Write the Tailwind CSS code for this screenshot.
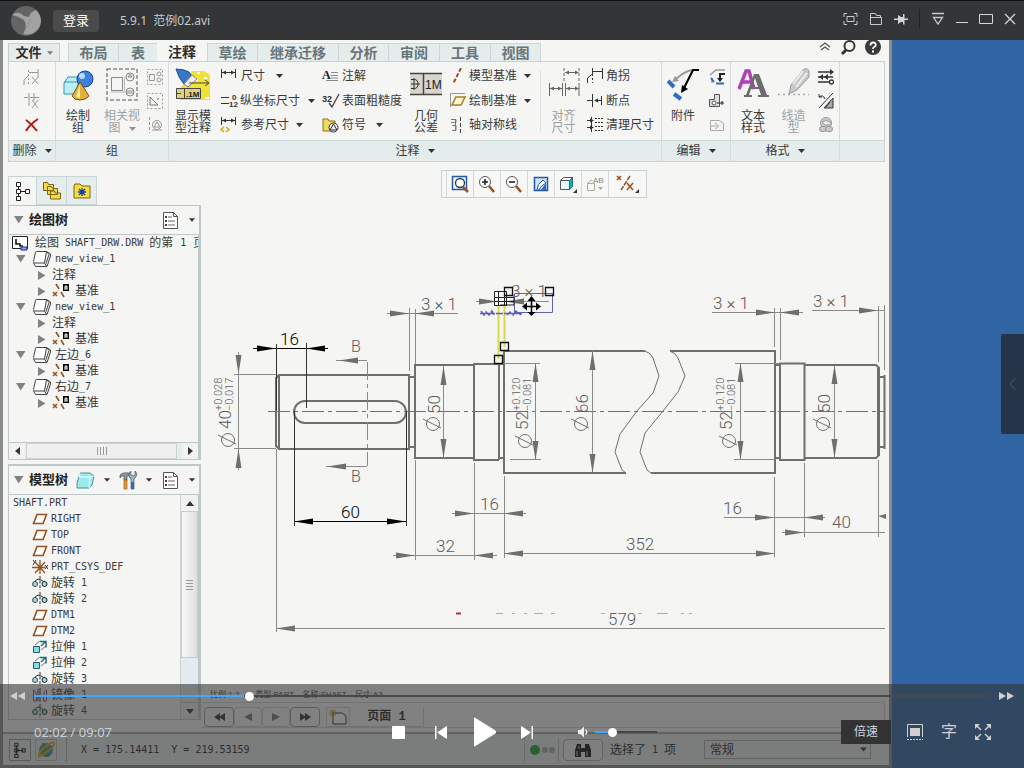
<!DOCTYPE html>
<html lang="zh-CN">
<head>
<meta charset="utf-8">
<meta name="viewport" content="width=device-width, initial-scale=1">
<title>5.9.1 范例02.avi</title>
<script src="https://cdn.jsdelivr.net/npm/@tailwindcss/browser@4"></script>
</head>
<body class="flex min-h-screen flex-col bg-[#333536] font-['Liberation_Sans','Noto_Sans_CJK_SC',sans-serif] text-xs text-[#3a3a3a]">

<svg class="hidden" aria-hidden="true">
  <symbol id="caret" viewBox="0 0 7 4"><path d="M0 0h7L3.500 4z" fill="#333"/></symbol>
  <symbol id="open" viewBox="0 0 10 8"><path d="M0 0h9.500L4.700 7.500z" fill="#828282"/></symbol>
  <symbol id="closed" viewBox="0 0 8 9"><path d="M0 0v9l7.500-4.500z" fill="#828282"/></symbol>
  <symbol id="view" viewBox="0 0 20 18"><g fill="#fff" stroke="#444"><path d="M1.500 11.500 3.500 2.500Q4 1.500 5 1.500h9.500L12.500 13H3Q1.500 13 1.500 11.500z"/><path d="M14.500 1.500 18.500 4v2L15 16.500H3.500L1.500 13M12.500 13l2 3M14.500 1.500l2.500 3-3 9" fill="none"/></g></symbol>
  <symbol id="datums" viewBox="0 0 18 16"><path d="m4 1 3 5M9 9l3 5" stroke="#96521c" stroke-width="1.600"/><path d="m1 9 4 4M5 9l-4 4" stroke="#96521c" stroke-width="1.500"/><path d="M11 1h6v7h-6z" fill="#000"/><path d="M13 7V3h2v4M13 5h2" stroke="#fff" fill="none"/></symbol>
  <symbol id="plane" viewBox="0 0 16 12"><path d="M5 1.500h9.500L11 10.500H1.500z" fill="#fff" stroke="#96521c" stroke-width="1.600"/></symbol>
  <symbol id="revolve" viewBox="0 0 16 14"><path d="M8 0v14" stroke="#333" stroke-dasharray="3 1.500"/><path d="M3 5q3-3.500 6-1t4 1" fill="none" stroke="#333"/><circle cx="3" cy="8" r="2.500" fill="#8fe3e3" stroke="#444"/><circle cx="12.500" cy="8" r="2.500" fill="#8fe3e3" stroke="#222"/></symbol>
  <symbol id="extrude" viewBox="0 0 16 14"><path d="M1.500 6.500h6v6h-6z" fill="#7fe0e6" stroke="#2a5c68"/><path d="m3 5 5-4M9 10l5-4" stroke="#777"/><path d="M8 1.500h6v6M9 6l4-4" fill="none" stroke="#1f6f7c" stroke-width="1.500"/></symbol>
  <symbol id="mirror" viewBox="0 0 16 14"><path d="M8 0v14M6 1v12" stroke="#333"/><path d="M1.500 13V2q3 1 3 6v5zM14.500 13V2q-3 1-3 6v5z" fill="none" stroke="#8a4aa0"/></symbol>
  <symbol id="list" viewBox="0 0 17 19"><path d="M1.500 1.500h10l4 4v12h-14z" fill="#fff" stroke="#555"/><path d="M11.500 1.500v4h4" fill="none" stroke="#555"/><path d="M3 5h2v2H3zM3 9h2v2H3zM3 13h2v2H3z" fill="#444"/><path d="M6 6h4M6 10h7M6 14h7" stroke="#666"/></symbol>
  <symbol id="dimh" viewBox="0 0 18 16"><path d="M1.500 1v9M15.500 1v9M2 4.500h13" stroke="#333"/><path d="m2 4.500 4-2v4zM15 4.500l-4-2v4z" fill="#333"/></symbol>
</svg>

<header class="flex h-10 shrink-0 items-center border-t border-[#111] bg-[#333536] pr-2 pl-[11px] text-[#c9c9c9]">
  <svg class="size-[30px]" viewBox="0 0 30 30" role="img" aria-label="用户头像"><circle cx="15" cy="15" r="15" fill="#646464"/><path d="M1 9q6-5 12 1l5 1q1-5 7-7 5 5 5 11-1 10-10 13-6 1-8 0 5-7 1-14Q7 10 1 9z" fill="#a2a2a2"/><path d="M20 12q-2 7-7 14" stroke="#919191" fill="none"/></svg>
  <button class="ml-3 h-[22px] w-[46px] rounded-sm bg-[#4b4b4b] text-[13px] leading-5 text-white">登录</button>
  <h1 class="ml-[21px] font-['Noto_Sans','Noto_Sans_CJK_SC',sans-serif] text-xs whitespace-pre text-[#c4cbd2]">5.9.1  范例02.avi</h1>
  <nav class="mb-1 ml-auto flex items-center gap-[11px]" aria-label="窗口">
    <button aria-label="适应窗口" class="h-4 w-[15px]"><svg viewBox="0 0 15 14" class="h-[14px] w-[15px]" fill="none" stroke="#c9c9c9"><path d="M1 5V1.500h3M11 1.500h3V5M14 9v3.500h-3M4 12.500H1V9M4 4.500h7v5H4z"/></svg></button>
    <button aria-label="打开文件" class="h-4 w-[14px]"><svg viewBox="0 0 14 14" class="size-[14px]" fill="none" stroke="#c9c9c9"><path d="M1.500 12.500v-11h5l1 2h4v2M1.500 5.500h11v7h-11z"/></svg></button>
    <button aria-label="置顶" class="h-4 w-[14px]"><svg viewBox="0 0 14 14" class="size-[14px]" fill="#d5d5d5"><path d="M0 6.500h4V3l3 2h2V2h1.500v4.500H14V8h-3.500v4.500H9V10H7l-3 2V8H0z"/></svg></button>
    <span class="h-5 w-px bg-[#222]"></span>
    <button aria-label="菜单" class="h-4 w-[14px]"><svg viewBox="0 0 14 14" class="size-[14px]" fill="none" stroke="#c9c9c9"><path d="M1 1.500h12M2.500 5.500h9L7 12z" stroke-width="1.300"/></svg></button>
    <button aria-label="最小化" class="h-4 w-3"><svg viewBox="0 0 12 14" class="h-[14px] w-3" stroke="#d5d5d5"><path d="M0 10.500h12"/></svg></button>
    <button aria-label="最大化" class="h-4 w-[14px]"><svg viewBox="0 0 14 14" class="size-[14px]" fill="none" stroke="#d5d5d5"><path d="M.5 2.500h13v9H.5z"/></svg></button>
    <button aria-label="关闭" class="h-4 w-[12px]"><svg viewBox="0 0 12 14" class="h-[14px] w-3" stroke="#d5d5d5" stroke-width="1.300"><path d="m1 2 10 10M11 2 1 12"/></svg></button>
  </nav>
</header>

<main class="relative grid flex-1 grid-cols-[892fr_132fr] bg-[#3164a2]">
  <section class="flex min-w-0 flex-col border-r-3 border-b-3 border-l-3 border-[#8b8b8b] bg-[#f5f5f4] pt-[3px]" aria-label="工程图">

    <!-- Ribbon tabs -->
    <div class="ml-[5px] mr-1 flex h-[18px] items-stretch text-sm leading-[16px] font-bold text-[#68757a]">
      <button class="flex w-[52px] items-center justify-center gap-[5px] border border-b-0 border-[#c6cfd0] bg-[#e6ebeb] text-[13px] text-[#2c2c2c]">文件<svg class="h-1 w-[6px] shrink-0 opacity-60"><use href="#caret"/></svg></button>
      <div class="ml-2 flex" role="tablist">
        <button role="tab" class="w-[51px] border border-b-0 border-[#cdd6d7] bg-[#e4ecec]">布局</button>
        <button role="tab" class="w-[38px] border-t border-[#cdd6d7] bg-[#e4ecec]">表</button>
        <button role="tab" aria-selected="true" class="w-[50px] text-[#2c2c2c]">注释</button>
        <button role="tab" class="w-[51px] border border-b-0 border-[#cdd6d7] bg-[#e4ecec]">草绘</button>
        <button role="tab" class="w-[81px] border-t border-r border-[#cdd6d7] bg-[#e4ecec]">继承迁移</button>
        <button role="tab" class="w-[50px] border-t border-r border-[#cdd6d7] bg-[#e4ecec]">分析</button>
        <button role="tab" class="w-[51px] border-t border-r border-[#cdd6d7] bg-[#e4ecec]">审阅</button>
        <button role="tab" class="w-[51px] border-t border-r border-[#cdd6d7] bg-[#e4ecec]">工具</button>
        <button role="tab" class="w-[50px] border-t border-r border-[#cdd6d7] bg-[#e4ecec]">视图</button>
      </div>
      <div class="mr-1 mb-[10px] ml-auto flex items-center gap-2">
        <button aria-label="折叠功能区"><svg class="h-[10px] w-3" viewBox="0 0 12 10" fill="none" stroke="#555" stroke-width="1.300"><path d="m1 5 5-4 5 4M2 8l4-3 4 3"/></svg></button>
        <button aria-label="搜索"><svg class="size-[18px]" viewBox="0 0 18 18" fill="none" stroke="#333"><circle cx="10.500" cy="8" r="5" stroke-width="2"/><path d="m7 12-4 4" stroke-width="3"/></svg></button>
        <button aria-label="帮助"><svg class="size-4" viewBox="0 0 16 16"><circle cx="8" cy="8" r="8" fill="#3a3a3a"/><path d="M5.500 6.500q0-3 2.700-3t2.500 2.500q0 1.500-1.500 2T8 10" fill="none" stroke="#fff" stroke-width="1.800"/><path d="M7 11.500h2v2H7z" fill="#fff"/></svg></button>
      </div>
    </div>

    <!-- Ribbon groups -->
    <div class="mr-1 ml-[5px] flex h-[101px] border border-[#c9d3d3] leading-3">
      <div class="flex w-[47px] flex-col border-r border-[#d5dcdc]">
        <div class="flex h-[78px] flex-col items-center pt-[3px]">
          <button aria-label="删除拐角" class="h-6"><svg class="size-[18px]" viewBox="0 0 18 18" fill="none" stroke="#999"><path d="M1 17v-5l4-4M15 1v9M6 4.500h9M9 9l6 7M15 9l-6 7"/><path d="M5.500 2v14" stroke-dasharray="2 2"/></svg></button>
          <button aria-label="删除断点" class="h-6"><svg class="size-[18px]" viewBox="0 0 18 18" fill="none" stroke="#999"><path d="M1 5.500h4M6 1v13M11 1v8M7 5.500h9M9 8l6 8M15 8l-6 8"/></svg></button>
          <button aria-label="删除" class="h-6"><svg class="h-4 w-[14px]" viewBox="0 0 14 16" fill="none" stroke="#b21a12" stroke-width="2"><path d="M1 3q6 4 11 11M13 2Q5 7 1 14"/></svg></button>
        </div>
        <button class="flex flex-1 items-center justify-center gap-2 border-t border-[#d0d9d9] bg-[#e4ecec]">删除<svg class="h-1 w-[7px]"><use href="#caret"/></svg></button>
      </div>
      <div class="flex w-[113px] flex-col border-r border-[#d5dcdc]">
        <div class="flex h-[78px] pt-[6px] pl-[6px]">
          <button class="flex w-8 flex-col items-center gap-2"><svg class="h-[34px] w-8 shrink-0" viewBox="0 0 32 34"><path d="M2 15 6 9h14v14l-3 3H2z" fill="#bdeff4" stroke="#3795ac"/><path d="M2 14h14v12M16 14l4-5" fill="none" stroke="#3795ac"/><circle cx="23" cy="11" r="8" fill="#3b82dd" stroke="#1c4590"/><circle cx="20" cy="8" r="3" fill="#b5dcff"/><path d="m18 14 9 14q-3 4-9 4-6 0-8-4z" fill="#e0b23c" stroke="#76520f"/><path d="m18 16-4 13 4 1z" fill="#fbe9a0"/></svg><span>绘制<br>组</span></button>
          <button class="ml-2 flex w-10 flex-col items-center gap-2 text-[#a0a0a0]"><svg class="h-[34px] w-8 shrink-0" viewBox="0 0 32 34" fill="none" stroke="#888"><path d="M1 1h30v31H1z" stroke-width="1.500" stroke-dasharray="4 2"/><path d="M5.500 9.500h11v13h-11z"/><path d="M18.500 9v15H5" stroke="#bbb"/><circle cx="24" cy="9" r="4"/><circle cx="24" cy="24" r="4"/><path d="m22 9 2-3 2 3zM20 23h8M20 25h8"/></svg><span>相关视<br>图<svg class="ml-2 inline h-1 w-[7px] opacity-50"><use href="#caret"/></svg></span></button>
          <div class="ml-[5px] flex flex-col gap-2 pt-px">
            <button aria-label="绘制组图元" class="h-4"><svg class="size-4" viewBox="0 0 16 16" fill="none" stroke="#999"><path d="M.5.500h15v15H.500z" stroke-dasharray="2 2"/><path d="M2.500 5.500h5v6h-5z"/><circle cx="12" cy="5" r="2"/><circle cx="12" cy="11" r="2"/></svg></button>
            <button aria-label="关联" class="h-4"><svg class="size-4" viewBox="0 0 16 16" fill="none" stroke="#999"><path d="M.5.500h15v15H.500z" stroke-dasharray="2 2"/><path d="m3 4 8 8H3zM11 5v2" stroke="#777"/></svg></button>
            <button aria-label="取消关联" class="h-4"><svg class="size-4" viewBox="0 0 16 16" fill="none" stroke="#999"><path d="M2.500 0v16" stroke-dasharray="3 2"/><circle cx="10" cy="8" r="4.500"/><path d="m7 10 3-5 3 5zM5 13h10"/></svg></button>
          </div>
        </div>
        <div class="flex flex-1 items-center justify-center border-t border-[#d0d9d9] bg-[#e4ecec]">组</div>
      </div>
      <div class="flex w-[493px] flex-col border-r border-[#d5dcdc]">
        <div class="flex h-[78px]">
          <button class="ml-1 flex w-10 flex-col items-center gap-2 pt-[6px]"><svg class="h-[34px] w-9 shrink-0" viewBox="0 0 36 34"><path d="M17 3h12l6 4v25H5V21z" fill="#efe139"/><path d="M22 5h3M29 10h3M20 12h3M30 30h4" stroke="#fff" stroke-width="2"/><path d="M1 1q8 0 13 3l3 4-8 8Q4 11 1 1z" fill="#3877c8" stroke="#21518c"/><path d="M17 7 9 16l4 3 9-8z" fill="#eee" stroke="#888"/><path d="M14 15h20m-4-3 4 3-4 3" fill="none" stroke="#444"/><path d="M1.500 20.500h24v10h-24z" fill="#ddd27a" stroke="#444"/><path d="M9.500 20v11M1 25.500h5" stroke="#444"/><text x="11" y="29" font-size="8" font-weight="700" fill="#222">.1M</text></svg><span class="w-10">显示模<br>型注释</span></button>
          <div class="ml-[7px] flex w-[102px] flex-col pt-[2px]">
            <button class="flex h-6 items-center gap-[3px]"><svg class="h-4 w-[18px]"><use href="#dimh"/></svg><span>尺寸</span><svg class="ml-2 h-1 w-[7px]"><use href="#caret"/></svg></button>
            <button class="flex h-[25px] items-center gap-[2px] whitespace-nowrap"><svg class="h-4 w-[18px] shrink-0 overflow-visible" viewBox="0 0 18 16"><path d="M1 4.500h8M1 10.500h8" stroke="#333"/><text x="12" y="7" font-size="8" font-weight="700" fill="#333">0</text><text x="9" y="14" font-size="8" font-weight="700" fill="#333">12</text></svg><span>纵坐标尺寸</span><svg class="ml-[6px] h-1 w-[7px] shrink-0"><use href="#caret"/></svg></button>
            <button class="flex h-6 items-center gap-[3px]"><svg class="h-4 w-[18px]" viewBox="0 0 18 16"><path d="M1.500 0v8M15.500 0v8M2 3.500h13" stroke="#333"/><path d="m2 3.500 4-2v4zM15 3.500l-4-2v4z" fill="#333"/><path d="m4 10-3 2.500L4 15M6 10l3 2.500L6 15" fill="none" stroke="#c9ae10" stroke-width="1.500"/></svg><span>参考尺寸</span><svg class="ml-1 h-1 w-[7px]"><use href="#caret"/></svg></button>
          </div>
          <div class="flex w-[86px] flex-col pt-[2px]">
            <button class="flex h-6 items-center gap-[2px]"><svg class="h-4 w-[18px] overflow-visible" viewBox="0 0 18 16"><text x="0" y="11" font-size="12" font-weight="700" font-family="Liberation Serif" fill="#222">A</text><path d="M9 4.500h7M9 7.500h7M4 12.500h12M9 10h7" stroke="#888"/></svg><span>注解</span></button>
            <button class="flex h-[25px] items-center gap-[2px] whitespace-nowrap"><svg class="h-4 w-[18px] shrink-0 overflow-visible" viewBox="0 0 18 16"><text x="0" y="9" font-size="9" font-weight="700" fill="#333">32</text><path d="m7 10 3 4 7-13" fill="none" stroke="#444" stroke-width="1.300"/></svg><span>表面粗糙度</span></button>
            <button class="flex h-6 items-center gap-[2px]"><svg class="h-4 w-[18px]" viewBox="0 0 18 16"><path d="M1 3V2h5l1 2h6v10H1z" fill="#f1dc5e" stroke="#8b7514"/><circle cx="11.500" cy="10.500" r="4.500" fill="#eee" stroke="#333"/><path d="m8 13 3.500-6 3.500 6z" fill="none" stroke="#333"/></svg><span>符号</span><svg class="ml-2 h-1 w-[7px]"><use href="#caret"/></svg></button>
          </div>
          <button class="flex w-9 flex-col items-center gap-2 pt-[6px]"><svg class="h-[34px] w-8 shrink-0" viewBox="0 0 32 34"><path d="M0 6h32v20H0z" fill="#d8d6cc"/><path d="M0 5.500h32M0 26.500h32M13.500 6v21" stroke="#444" stroke-width="1.500"/><path d="M1 11.500h3q4 0 4 4.500t-4 4.500H1M4 10v12M1 16h9" fill="none" stroke="#333"/><text x="15" y="21" font-size="12" fill="#222">1M</text></svg><span>几何<br>公差</span></button>
          <div class="ml-[6px] flex w-[90px] flex-col pt-[2px]">
            <button class="flex h-6 items-center gap-[3px] whitespace-nowrap"><svg class="size-4 shrink-0" viewBox="0 0 16 16"><path d="M11 0 3 16" stroke="#96521c" stroke-width="2" stroke-dasharray="4 2"/></svg><span>模型基准</span><svg class="ml-1 h-1 w-[7px] shrink-0"><use href="#caret"/></svg></button>
            <button class="flex h-[25px] items-center gap-[3px] whitespace-nowrap"><svg class="size-4 shrink-0" viewBox="0 0 16 16"><path d="M.5.500V14M.500.500H15" stroke="#999"/><path d="M6 4h9l-4 8H2z" fill="#fff8e0" stroke="#b57a1c" stroke-width="1.600"/></svg><span>绘制基准</span><svg class="ml-1 h-1 w-[7px] shrink-0"><use href="#caret"/></svg></button>
            <button class="flex h-6 items-center gap-[3px] whitespace-nowrap"><svg class="size-4 shrink-0" viewBox="0 0 16 16" fill="none"><path d="M1 2.500h5v3H1M2 8.500h4v5H2M5.500 2v12" stroke="#777"/><path d="M10.500 0v16" stroke="#444" stroke-dasharray="4 2"/></svg><span>轴对称线</span></button>
          </div>
          <button class="my-2 flex w-[46px] flex-col items-center gap-[9px] border-l border-[#dde2e2] text-[#a0a0a0]"><svg class="-mt-[2px] h-[33px] w-8 shrink-0" viewBox="0 0 32 33" fill="none" stroke="#666"><path d="M16 0v13M31 0v13" stroke-dasharray="3 2"/><path d="M1.500 15v13M14.500 15v13M17.500 15v13M31 15v13M17 4.500h13M2 20.500h12M18 20.500h13"/><path d="m17 4.500 4-2v4zM31 4.500l-4-2v4zM2 20.500l4-2v4zM14 20.500l-4-2v4zM18 20.500l4-2v4zM31 20.500l-4-2v4z" fill="#666" stroke="none"/></svg><span>对齐<br>尺寸</span></button>
          <div class="flex flex-1 flex-col pt-[2px] pl-px">
            <button class="flex h-6 items-center gap-[3px]"><svg class="size-4" viewBox="0 0 16 16" fill="none" stroke="#333"><path d="M.5 15v-5l5-4V0M15.500 0v11M6 3.500h9"/><path d="M5.500 6v9" stroke-dasharray="2 2"/></svg><span>角拐</span></button>
            <button class="flex h-[25px] items-center gap-[3px]"><svg class="size-4" viewBox="0 0 16 16" fill="none" stroke="#333"><path d="M0 7.500h5M5.500 1v13M8 7.500h7M14.500 3v9"/><path d="m7 7.500 4-2v4z" fill="#333" stroke="none"/></svg><span>断点</span></button>
            <button class="flex h-6 items-center gap-[3px] whitespace-nowrap"><svg class="size-4 shrink-0" viewBox="0 0 16 16" fill="none" stroke="#333"><path d="M0 3.500h6M0 10.500h6M4.500 0v15"/><path d="m7 3.500-4-2v4zM7 10.500l-4-2v4z" fill="#333" stroke="none"/><path d="M8 1.500h8M8 5.500h8M8 9.500h8M8 13.500h8" stroke-dasharray="2 1"/></svg><span>清理尺寸</span></button>
          </div>
        </div>
        <button class="flex flex-1 items-center justify-center gap-2 border-t border-[#d0d9d9] bg-[#e4ecec]">注释<svg class="h-1 w-[7px]"><use href="#caret"/></svg></button>
      </div>
      <div class="flex w-[69px] flex-col border-r border-[#d5dcdc]">
        <div class="flex h-[78px] justify-between px-[5px] pt-[6px]">
          <button class="flex w-8 flex-col items-center gap-2"><svg class="h-[34px] w-8 shrink-0" viewBox="0 0 32 34" fill="none"><path d="M27 2q-8 0-18 9" stroke="#999" stroke-width="2"/><path d="m5 14 3-6 4 5z" fill="#999"/><path d="M32 2h-6L16 22" stroke="#000" stroke-width="2"/><path d="m14 25 1-8 6 4z" fill="#000"/><path d="m1 13 6 6M7 26l7 5" stroke="#2b6cc4" stroke-width="4"/></svg><span>附件</span></button>
          <div class="flex flex-col gap-2 pt-px">
            <button aria-label="移动附件" class="h-4"><svg class="size-4" viewBox="0 0 16 16" fill="none"><path d="M16 1H7L1 6M3 9v5" stroke="#999" stroke-width="1.500"/><path d="M16 5h-5v7" stroke="#222" stroke-width="2"/><path d="M8 9h6l-3 4z" fill="#222"/><path d="M7 14.500h8M2 9l3 4" stroke="#2b6cc4" stroke-width="2"/></svg></button>
            <button aria-label="对齐" class="h-4"><svg class="size-4" viewBox="0 0 16 16" fill="none" stroke="#555"><path d="M.5 6.500h5v-5h5v12H.500z" fill="#ddd"/><circle cx="5" cy="10" r="2" fill="#fff"/><path d="M8 10h7m-2-2v4" stroke="#222"/></svg></button>
            <button aria-label="移动到页面" class="h-4"><svg class="size-4" viewBox="0 0 16 16" fill="none" stroke="#aaa"><path d="M1.500 3.500h9l4 3v7h-13z"/><path d="M1 9h7m-2-3 4 3-4 3"/></svg></button>
          </div>
        </div>
        <button class="flex flex-1 items-center justify-center gap-2 border-t border-[#d0d9d9] bg-[#e4ecec]">编辑<svg class="h-1 w-[7px]"><use href="#caret"/></svg></button>
      </div>
      <div class="flex w-[109px] flex-col border-r border-[#d5dcdc]">
        <div class="flex h-[78px] justify-between pt-[6px] pr-[5px] pl-[6px]">
          <button class="flex w-8 flex-col items-center gap-2"><svg class="h-[34px] w-8 shrink-0" viewBox="0 0 32 34" fill="none"><path d="m2 21 7-18h3l5 18M5 14h9" stroke="#b040b8" stroke-width="3.500"/><path d="M17 6h5l8 21h2v2H21v-2h3l-2-6h-8l-2 6h3v2H7v-2h2zM18 10l-3 9h6z" fill="#6c6c6c" fill-rule="evenodd"/></svg><span>文本<br>样式</span></button>
          <button class="flex w-8 flex-col items-center gap-2 text-[#a0a0a0]"><svg class="h-[34px] w-8 shrink-0" viewBox="0 0 32 34"><path d="M25 2q4-3 6 1v6L19 22l-8 4 2-9z" fill="#c9c9c9" stroke="#999"/><path d="m25 3-10 13M29 5 18 19" stroke="#eee" stroke-width="2"/><path d="M0 26.500h31" stroke="#aaa" stroke-width="1.500" stroke-dasharray="2 3"/></svg><span>线造<br>型</span></button>
          <div class="flex flex-col gap-2 pt-px">
            <button aria-label="箭头样式" class="h-4"><svg class="size-4" viewBox="0 0 16 16" fill="none" stroke="#333" stroke-width="1.300"><path d="M0 3h15M0 8h15M0 13h11"/><path d="m12 0 4 3-4 3zM1 8l4-3v6zM6 8l4-3v6z" fill="#333" stroke="none"/><circle cx="13.500" cy="13" r="2" fill="#fff"/></svg></button>
            <button aria-label="重复上一格式" class="h-4"><svg class="size-4" viewBox="0 0 16 16" fill="none" stroke="#333"><path d="M15 0 1 15M1 4q4-3 6 2M1 1v3h3"/><path d="M15 5v10H6z" fill="#aaa"/><path d="m12 9-4 5"/></svg></button>
            <button aria-label="超链接" class="h-4"><svg class="size-4" viewBox="0 0 16 16" fill="#c9c9c9" stroke="#999"><circle cx="8" cy="6" r="5.500"/><path d="M4 5q4-3 8 0t-5 3z" fill="#eee"/><rect x="1.500" y="9.500" width="7" height="5" rx="2.500"/><rect x="7.500" y="9.500" width="7" height="5" rx="2.500"/></svg></button>
          </div>
        </div>
        <button class="flex flex-1 items-center justify-center gap-2 border-t border-[#d0d9d9] bg-[#e4ecec]">格式<svg class="h-1 w-[7px]"><use href="#caret"/></svg></button>
      </div>
      <div class="flex flex-1 flex-col"><div class="h-[78px]"></div><div class="flex-1 border-t border-[#d0d9d9] bg-[#e4ecec]"></div></div>
    </div>

    <div class="flex flex-1 pl-[5px]">
      <!-- Side trees -->
      <aside class="flex w-[193px] shrink-0 flex-col pt-[14px]">
        <div class="flex h-[29px]">
          <button aria-label="模型树" class="flex w-7 items-center justify-center border-t border-l border-[#c9d3d3]"><svg class="size-5" viewBox="0 0 20 20" fill="none" stroke="#222"><path d="M5.500 4v12M6 10.500h8"/><path d="M3.500 1.500h4v4h-4zM3.500 8.500h4v4h-4zM3.500 15.500h4v4h-4zM12.500 8.500h4v4h-4z" fill="#fff"/></svg></button>
          <button aria-label="文件夹浏览器" class="flex w-[31px] items-center justify-center border border-[#c9d3d3] bg-[#e4ecec]"><svg class="size-5" viewBox="0 0 20 20" fill="#f3d94e" stroke="#7c6410"><path d="M1.500 9V1.500h4l1 2h5v6H1.500zM5.500 13V5.500h4l1 2h5v6h-10zM8.500 18v-8h4l1 2h5v6h-10z"/></svg></button>
          <button aria-label="收藏夹" class="flex w-[30px] items-center justify-center border border-l-0 border-[#c9d3d3] bg-[#e4ecec]"><svg class="h-4 w-[18px]" viewBox="0 0 18 16"><path d="M1 15V3l1-2h5l2 2h8v12z" fill="#f4dc42" stroke="#7c6410"/><path d="M9 5v8M5 9h8M6 6l6 6M12 6l-6 6" stroke="#1840a0" stroke-width="1.300"/></svg></button>
        </div>
        <div class="flex h-[29px] items-center border-t border-r-2 border-l border-[#bfc8c9] pr-1 pl-[5px]">
          <svg class="h-2 w-[10px]"><use href="#open"/></svg>
          <h2 class="ml-[5px] text-[13px] leading-4 font-bold text-[#222]">绘图树</h2>
          <button aria-label="设置" class="ml-auto flex items-center gap-[10px]"><svg class="h-[19px] w-[17px]"><use href="#list"/></svg><svg class="h-1 w-[6px]"><use href="#caret"/></svg></button>
        </div>
        <ul class="h-[208px] overflow-hidden border-t border-r-3 border-l border-[#bfc8c9] font-['DejaVu_Sans_Mono','Noto_Sans_CJK_SC',monospace] leading-4 whitespace-nowrap [&>li]:flex [&>li]:h-4 [&>li]:items-center">
          <li class="pl-[3px]"><svg class="mr-[7px] size-4 shrink-0" viewBox="0 0 16 16" fill="none"><path d="M.5 1.500h15v12H.500z" fill="#fff" stroke="#222"/><path d="M4 4v5h4v2h3" stroke="#111" stroke-width="1.600"/><path d="M9 12h6v3H9z" fill="#9aa0e8" stroke="#22a"/></svg><span>绘图</span><span class="ml-[6px] text-[10px]">SHAFT_DRW.DRW</span><span class="ml-[6px]">的第</span><span class="mx-[7px] text-[10px]">1</span><span>页</span></li>
          <li class="pl-[7px]"><svg class="mr-[6px] h-2 w-[10px]"><use href="#open"/></svg><svg class="mr-[3px] h-[18px] w-5"><use href="#view"/></svg><span class="text-[10px]">new_view_1</span></li>
          <li class="pl-[29px]"><svg class="mr-[6px] h-[9px] w-2"><use href="#closed"/></svg><span>注释</span></li>
          <li class="pl-[29px]"><svg class="mr-[6px] h-[9px] w-2"><use href="#closed"/></svg><svg class="mr-[5px] h-4 w-[18px]"><use href="#datums"/></svg><span>基准</span></li>
          <li class="pl-[7px]"><svg class="mr-[6px] h-2 w-[10px]"><use href="#open"/></svg><svg class="mr-[3px] h-[18px] w-5"><use href="#view"/></svg><span class="text-[10px]">new_view_1</span></li>
          <li class="pl-[29px]"><svg class="mr-[6px] h-[9px] w-2"><use href="#closed"/></svg><span>注释</span></li>
          <li class="pl-[29px]"><svg class="mr-[6px] h-[9px] w-2"><use href="#closed"/></svg><svg class="mr-[5px] h-4 w-[18px]"><use href="#datums"/></svg><span>基准</span></li>
          <li class="pl-[7px]"><svg class="mr-[6px] h-2 w-[10px]"><use href="#open"/></svg><svg class="mr-[3px] h-[18px] w-5"><use href="#view"/></svg><span>左边</span><span class="text-[10px]">_6</span></li>
          <li class="pl-[29px]"><svg class="mr-[6px] h-[9px] w-2"><use href="#closed"/></svg><svg class="mr-[5px] h-4 w-[18px]"><use href="#datums"/></svg><span>基准</span></li>
          <li class="pl-[7px]"><svg class="mr-[6px] h-2 w-[10px]"><use href="#open"/></svg><svg class="mr-[3px] h-[18px] w-5"><use href="#view"/></svg><span>右边</span><span class="text-[10px]">_7</span></li>
          <li class="pl-[29px]"><svg class="mr-[6px] h-[9px] w-2"><use href="#closed"/></svg><svg class="mr-[5px] h-4 w-[18px]"><use href="#datums"/></svg><span>基准</span></li>
        </ul>
        <div class="flex h-[18px] border border-r-3 border-[#bfc8c9] bg-[#e4ecec]">
          <button aria-label="向左滚动" class="flex w-4 items-center justify-center bg-[#f2f2f2]"><svg class="h-2 w-[5px]" viewBox="0 0 5 8"><path d="M5 0v8L0 4z" fill="#333"/></svg></button>
          <div class="mx-px flex flex-1 items-center justify-center gap-[2px] border border-[#ccd2d2] bg-[#f0f0f0]"><i class="h-2 w-px bg-[#999]"></i><i class="h-2 w-px bg-[#999]"></i><i class="h-2 w-px bg-[#999]"></i><i class="h-2 w-px bg-[#999]"></i></div>
          <button aria-label="向右滚动" class="ml-1 flex w-4 items-center justify-center bg-[#f2f2f2]"><svg class="h-2 w-[5px]" viewBox="0 0 5 8"><path d="M0 0v8l5-4z" fill="#333"/></svg></button>
        </div>
        <div class="mt-1 flex h-[30px] items-center border-t-2 border-r-2 border-l border-[#bfc8c9] pr-1 pl-[5px]">
          <svg class="h-2 w-[10px]"><use href="#open"/></svg>
          <h2 class="ml-[5px] text-[13px] leading-4 font-bold text-[#222]">模型树</h2>
          <button aria-label="显示" class="ml-auto flex items-center gap-[9px]"><svg class="h-[18px] w-5" viewBox="0 0 20 18"><path d="m2 12 3-10h10l4 3-2 9-3 3H2z" fill="#9ce9ee" stroke="#4d8f98"/><path d="M14 17 15 6l4-1M5 2l-1 4h11" fill="none" stroke="#fff"/></svg><svg class="h-1 w-[6px]"><use href="#caret"/></svg></button>
          <button aria-label="工具" class="ml-[8px] flex items-center gap-[8px]"><svg class="size-5" viewBox="0 0 20 20"><path d="M2 5q2-3 10-2v3H9v4H6V6H4L2 8z" fill="#8a949c" stroke="#444" stroke-width=".600"/><path d="M6 10h3v9H6z" fill="#e49a2c" stroke="#85500c" stroke-width=".600"/><path d="M13 1v4l2 1 2-1V1q3 2 1 6l-2 2v10h-3V9q-4-4 0-8z" fill="#9bb4cc" stroke="#345" stroke-width=".600"/><path d="M13 12h3v7h-3z" fill="#3466c0"/></svg><svg class="h-1 w-[6px]"><use href="#caret"/></svg></button>
          <button aria-label="设置模型树" class="ml-[10px] flex items-center gap-[10px]"><svg class="h-[19px] w-[17px]"><use href="#list"/></svg><svg class="h-1 w-[6px]"><use href="#caret"/></svg></button>
        </div>
        <div class="flex border-t border-r-3 border-b border-l border-[#bfc8c9]">
          <ul class="flex-1 font-['DejaVu_Sans_Mono','Noto_Sans_CJK_SC',monospace] leading-4 whitespace-nowrap [&>li]:flex [&>li]:h-4 [&>li]:items-center [&>li]:pl-[23px] [&_svg]:mr-[3px] [&_svg]:h-[14px] [&_svg]:w-4">
            <li class="-ml-[19px] text-[10px]">SHAFT.PRT</li>
            <li class="text-[10px]"><svg viewBox="0 0 16 12"><use href="#plane"/></svg>RIGHT</li>
            <li class="text-[10px]"><svg viewBox="0 0 16 12"><use href="#plane"/></svg>TOP</li>
            <li class="text-[10px]"><svg viewBox="0 0 16 12"><use href="#plane"/></svg>FRONT</li>
            <li class="text-[10px]"><svg viewBox="0 0 16 14" stroke="#96521c" stroke-width="1.300"><path d="M8 0v14M0 7.500h13M3 2l10 11M13 2 3 13"/><path d="m1 0 2 3M4 0 1 5M13 5l3 4M16 5l-3 4" stroke="#333" stroke-width="1"/></svg>PRT_CSYS_DEF</li>
            <li><svg><use href="#revolve"/></svg>旋转<span class="ml-[6px] text-[10px]">1</span></li>
            <li><svg><use href="#revolve"/></svg>旋转<span class="ml-[6px] text-[10px]">2</span></li>
            <li class="text-[10px]"><svg viewBox="0 0 16 12"><use href="#plane"/></svg>DTM1</li>
            <li class="text-[10px]"><svg viewBox="0 0 16 12"><use href="#plane"/></svg>DTM2</li>
            <li><svg><use href="#extrude"/></svg>拉伸<span class="ml-[6px] text-[10px]">1</span></li>
            <li><svg><use href="#extrude"/></svg>拉伸<span class="ml-[6px] text-[10px]">2</span></li>
            <li><svg><use href="#revolve"/></svg>旋转<span class="ml-[6px] text-[10px]">3</span></li>
            <li><svg><use href="#mirror"/></svg>镜像<span class="ml-[6px] text-[10px]">1</span></li>
            <li><svg><use href="#revolve"/></svg>旋转<span class="ml-[6px] text-[10px]">4</span></li>
          </ul>
          <div class="flex w-[18px] flex-col border-l border-[#ccd2d2] bg-[#e2ecec]">
            <button aria-label="向上滚动" class="flex h-4 items-center justify-center bg-[#f2f2f2]"><svg class="h-[5px] w-2" viewBox="0 0 8 5"><path d="M0 5h8L4 0z" fill="#333"/></svg></button>
            <div class="flex h-[147px] flex-col items-center justify-center gap-[2px] border border-[#c6cdcd] bg-linear-to-r from-[#f8f8f8] to-[#dfdfdf]"><i class="h-px w-[7px] bg-[#999]"></i><i class="h-px w-[7px] bg-[#999]"></i><i class="h-px w-[7px] bg-[#999]"></i><i class="h-px w-[7px] bg-[#999]"></i></div>
            <button aria-label="向下滚动" class="mt-auto flex h-[17px] items-center justify-center border-t border-[#c6cdcd] bg-[#ececec]"><svg class="h-[5px] w-2" viewBox="0 0 8 5"><path d="M0 0h8L4 5z" fill="#333"/></svg></button>
          </div>
        </div>
      </aside>

      <!-- Graphics area -->
      <div class="flex min-w-0 flex-1 flex-col pl-px">
        <div class="mt-2 ml-[239px] flex h-7 w-[206px] shrink-0 border border-[#c9d0d1] bg-[#f7f7f6] pl-1 [&>button]:flex [&>button]:w-[27px] [&>button]:items-center [&>button]:justify-center [&>button]:border-l [&>button]:border-[#d3d9da] [&>button:last-child]:flex-1">
          <button aria-label="重新调整"><svg class="size-[18px]" viewBox="0 0 18 18" fill="none"><path d="M1.500 1.500h14v13h-14z" fill="#f2f8ff" stroke="#235aa5" stroke-width="1.500"/><circle cx="9" cy="8" r="4.500" fill="#fff" stroke="#333" stroke-width="1.300"/><path d="m12 12 5 5" stroke="#96521c" stroke-width="2.500"/></svg></button>
          <button aria-label="放大"><svg class="size-[18px]" viewBox="0 0 18 18" fill="none"><circle cx="7" cy="7" r="5.500" fill="#fff" stroke="#555"/><path d="M4 7h6M7 4v6" stroke="#222" stroke-width="1.600"/><path d="m11 11 5 6" stroke="#96521c" stroke-width="2.500"/></svg></button>
          <button aria-label="缩小"><svg class="size-[18px]" viewBox="0 0 18 18" fill="none"><circle cx="7" cy="7" r="5.500" fill="#fff" stroke="#555"/><path d="M4 7h6" stroke="#222" stroke-width="1.600"/><path d="m11 11 5 6" stroke="#96521c" stroke-width="2.500"/></svg></button>
          <button aria-label="重画"><svg class="size-4" viewBox="0 0 16 16"><path d="M1.500 1.500h13v13h-13z" fill="#cfe3f8" stroke="#235aa5" stroke-width="1.500"/><path d="M4 14q0-6 6-10l3 3q-6 3-7 7z" fill="#fff" stroke="#235aa5"/><path d="M8 14l5-7v7z" fill="#2c67b8"/></svg></button>
          <button aria-label="显示样式"><svg class="size-[18px]" viewBox="0 0 18 18"><path d="m1.500 5.500 3-3h9l-3 3z" fill="#fff" stroke="#555"/><path d="M1.500 5.500h9v9h-9z" fill="#e8fbfb" stroke="#555"/><path d="m10.500 5.500 3-3v9l-3 3z" fill="#16b1bf" stroke="#2a6670"/><path d="M18 14v4h-4z" fill="#333"/></svg></button>
          <button aria-label="注释显示"><svg class="size-[18px] overflow-visible" viewBox="0 0 18 18" fill="none" stroke="#aaa"><path d="M1.500 8.500h7v7h-7zM1.500 8.500l3-3h2"/><text x="7" y="8" font-size="8" fill="#888" stroke="none">AB</text><path d="M12 12h5l-2.500 3z" fill="#aaa" stroke="none"/></svg></button>
          <button aria-label="基准显示"><svg class="h-[18px] w-6" viewBox="0 0 24 18" fill="none" stroke="#96521c" stroke-width="1.500"><path d="m1 1 4 4M5 1 1 5M11 8l6 7M17 8l-6 7"/><path d="M14 1 5 15" stroke-dasharray="5 1"/><path d="M23 14v4h-4z" fill="#333" stroke="none"/></svg></button>
        </div>
        <svg class="mt-[2px] w-full" viewBox="202 200 687 488" fill="none" stroke="#6f6f6d" font-family="Roboto, sans-serif" font-weight="300" font-size="17" role="img" aria-label="轴零件图">
          <defs>
            <path id="r" d="M0 0-19-3V3z"/><path id="l" d="M0 0 19-3V3z"/><path id="u" d="M0 0-3 19H3z"/><path id="d" d="M0 0-3-19H3z"/>
            <g id="dia" fill="none"><circle r="6.500"/><path d="m-10-5 18 9"/></g>
          </defs>
          <!-- Centre line -->
          <path d="M268 411.500h617" stroke-dasharray="22 4 4 4"/>
          <!-- Shaft outline -->
          <g stroke-width="2">
            <path d="M409 375H279l-3 3v68l3 3h130zM279 375v74M409 377h6M409 447h6M415 364v95M415 365h59M415 458h59"/>
            <path d="M305 401h90a11 11 0 0 1 0 22h-90a11 11 0 0 1 0-22z"/>
            <path d="M474 363v98M474 364h30M474 460h25M499 364v96M499 458h5M504 350v124M504 351h141M504 473h122"/>
            <path d="M670 351h105v122H651M775 365h5M775 458h5M780 363.500h24.500V460H780zM804 365h72l3 3v87l-3 3h-72"/>
            <path d="M878.500 368v88" stroke-width="3"/><path d="M880 377h4M880 447h4M884.500 375v74"/>
          </g>
          <path d="M645 351q6 2 8 7l6 18-6 17-16 18-17 23-5 18 7 18 4 3M670 351q6 2 8 7l7 18-7 16-15 19-18 22-5 19 7 18 4 3"/>
          <!-- Extension and dimension lines -->
          <g stroke="#8a8a88">
            <path d="M276.500 449v183M234 374.500h42M234 448.500h42M238.500 352v118M409.500 308v63M415.500 309v55M387 313.500h71M415.500 460v100M474.500 463v97M504.500 476v82"/>
            <path d="M443.500 366v92M452 513.500h74M393 555.500h104M504 553.500h271M276 628.500h609M499 363.500h41M510 459.500h31M535.500 364v96M592.500 351v121"/>
            <path d="M712 312.500h91M774.500 308v39M780.500 308v52M812 310.500h73M878.500 306v56M884.500 305v65M735 363.500h45M734 459.500h41M740.500 364v96M834.500 366v92"/>
            <path d="M774.500 477v80M804.500 463v74M878.500 460v77M724 517.500h101M782 532.500h103"/>
            <path d="M367.500 362v104" stroke-dasharray="18 4 4 4"/><path d="M336 360.500h31M326 466.500h41M476 301.500h73"/>
          </g>
          <g fill="#6f6f6d" stroke="none">
            <use href="#d" x="238.500" y="374"/><use href="#u" x="238.500" y="449"/><use href="#r" x="409" y="313.500"/><use href="#l" x="415" y="313.500"/>
            <use href="#u" x="443.500" y="366"/><use href="#d" x="443.500" y="458"/><use href="#r" x="474" y="513.500"/><use href="#l" x="504" y="513.500"/>
            <use href="#r" x="415" y="555.500"/><use href="#l" x="474" y="555.500"/><use href="#l" x="504" y="553.500"/><use href="#r" x="775" y="553.500"/><use href="#l" x="276" y="628.500"/>
            <use href="#u" x="535.500" y="363"/><use href="#d" x="535.500" y="460"/><use href="#u" x="592.500" y="351"/><use href="#d" x="592.500" y="473"/>
            <use href="#r" x="775" y="312.500"/><use href="#l" x="780" y="312.500"/><use href="#r" x="878" y="310.500"/>
            <use href="#u" x="740.500" y="363"/><use href="#d" x="740.500" y="460"/><use href="#u" x="834.500" y="365"/><use href="#d" x="834.500" y="458"/>
            <use href="#r" x="774" y="517.500"/><use href="#l" x="804" y="517.500"/><use href="#r" x="804" y="532.500"/><path d="m878 516 8-2v5z"/>
            <use href="#l" x="339" y="360.500"/><use href="#l" x="327" y="466.500"/><use href="#r" x="498" y="301.500"/><use href="#l" x="505" y="301.500"/>
          </g>
          <!-- Highlighted keyway dimensions -->
          <path d="M253 348.500h75M294 521.500h112" stroke="#000"/>
          <path d="M276.500 344v66M306.500 343v65M294.500 411v115M406.500 411v115" stroke="#333"/>
          <g fill="#000" stroke="none"><use href="#r" x="276" y="348.500"/><use href="#l" x="306" y="348.500"/><use href="#l" x="294" y="521.500"/><use href="#r" x="406" y="521.500"/><text x="280" y="345">16</text><text x="341" y="518">60</text></g>
          <!-- Dimension text -->
          <g fill="#5c5c5a" stroke="none">
            <text x="351" y="352" font-size="16">B</text><text x="351" y="482" font-size="16">B</text>
            <text x="421" y="310">3 × 1</text><text x="713" y="309">3 × 1</text><text x="813" y="307">3 × 1</text><text x="511" y="297">3 × 1</text>
            <text x="480" y="510">16</text><text x="436" y="552">32</text><text x="626" y="550">352</text><text x="608" y="625">579</text><text x="723" y="514">16</text><text x="832" y="528">40</text>
            <text transform="translate(231 429) rotate(-90)">40</text><text transform="translate(222 411) rotate(-90)" font-size="11">+0.028</text><text transform="translate(233 411) rotate(-90)" font-size="11">−0.017</text>
            <text transform="translate(440 414) rotate(-90)">50</text>
            <text transform="translate(528 430) rotate(-90)">52</text><text transform="translate(520 411) rotate(-90)" font-size="11">+0.120</text><text transform="translate(531 411) rotate(-90)" font-size="11">−0.081</text>
            <text transform="translate(588 413) rotate(-90)">66</text>
            <text transform="translate(732 430) rotate(-90)">52</text><text transform="translate(724 411) rotate(-90)" font-size="11">+0.120</text><text transform="translate(735 411) rotate(-90)" font-size="11">−0.081</text>
            <text transform="translate(830 413) rotate(-90)">50</text>
          </g>
          <use href="#dia" x="228" y="440"/><use href="#dia" x="433" y="424"/><use href="#dia" x="525" y="441"/><use href="#dia" x="581" y="424"/><use href="#dia" x="729" y="441"/><use href="#dia" x="823" y="424"/>
          <!-- Selected dimension being dragged -->
          <path d="M498.500 305v54M504.500 305v42" stroke="#dcd94a" stroke-width="2"/>
          <path d="M514.500 293.500h38v19h-38z" stroke="#6060b8"/>
          <path d="M480 313.500h42M481 311l3 4 2-3 3 3 3-4 2 4M507 315l3-3 3 3 3-4 5 4" stroke="#6060b8" stroke-width="1.500" stroke-dasharray="7 1"/>
          <path d="M494.500 291.500h12v14h-12zM498.500 291v14M494 297.500h20v7.500h-14M494 301.500h20M504.500 291v14" stroke="#222"/>
          <path d="M504.500 287.500h8v8h-8zM545.500 287.500h8v8h-8zM500.500 342.500h8v8h-8zM494.500 355.500h8v8h-8z" stroke="#111" stroke-width="1.300"/>
          <path d="M531.500 299v15M524 306.500h15" stroke="#000" stroke-width="1.500"/><path d="m531.500 296-4 5h8zM531.500 316l-4-4h8zM522 306.500l5-4v8zM541 306.500l-5-4v8z" fill="#000" stroke="none"/>
          <path d="M456 613.500h5" stroke="#a83a30" stroke-width="2"/>
          <path d="M496 613.500h7M512 613.500h3M524 613.500h3M534 613.500h9M551 613.500h4M601 613.500h4M638 613.500h4M657 613.500h11M681 613.500h3M689 613.500h3" stroke="#e09a8e"/>
        </svg>
        <p class="ml-2 flex h-[14px] items-center gap-2 text-[8px] leading-3 whitespace-nowrap"><span>比例:1:2</span><span class="ml-2">类型:PART</span><span>名称:SHAFT</span><span>尺寸:A3</span></p>
        <div class="mr-1 flex flex-1 items-start border border-l-0 border-[#cfd3d3] pt-1 pl-[2px] font-['Liberation_Mono','Noto_Sans_CJK_SC',monospace] text-[#222]">
          <button aria-label="第一页" class="flex h-5 w-[30px] items-center justify-center rounded-sm border border-[#999]"><svg class="h-2 w-[11px]" viewBox="0 0 11 8"><path d="M6 0v8L0 4zM11 0v8L5 4z" fill="#333"/></svg></button>
          <button aria-label="上一页" class="flex h-5 w-7 items-center justify-center rounded-sm border border-[#ccc]"><svg class="size-2" viewBox="0 0 8 8"><path d="M8 0v8L0 4z" fill="#777"/></svg></button>
          <button aria-label="下一页" class="flex h-5 w-7 items-center justify-center rounded-sm border border-[#ccc]"><svg class="size-2" viewBox="0 0 8 8"><path d="M0 0v8l8-4z" fill="#777"/></svg></button>
          <button aria-label="最后一页" class="flex h-5 w-[30px] items-center justify-center rounded-sm border border-[#999]"><svg class="h-2 w-[11px]" viewBox="0 0 11 8"><path d="M0 0v8l6-4zM5 0v8l6-4z" fill="#333"/></svg></button>
          <button aria-label="新建页面" class="ml-[6px] flex h-5 w-6 items-center justify-center border border-[#ccc]"><svg class="h-4 w-[18px]" viewBox="0 0 18 16"><path d="M4 4h9l4 3v8H4z" fill="#fff" stroke="#333"/><path d="M4 0v9M0 4h9M1 1l6 6M7 1 1 7" stroke="#b39012"/></svg></button>
          <button class="flex h-5 w-[74px] items-center justify-center border-r border-b border-[#ccc] text-xs font-bold whitespace-pre">页面 1</button>
        </div>
      </div>
    </div>

    <!-- Status bar -->
    <footer class="mt-1 flex h-[33px] items-center border-t-2 border-[#a5a8a8] bg-[#e6eaea] pl-[6px] font-['DejaVu_Sans_Mono','Noto_Sans_CJK_SC',monospace] text-[#222]">
      <button aria-label="导航器" class="flex h-[22px] w-[22px] items-center justify-center border border-[#999]"><svg class="size-4" viewBox="0 0 20 20" fill="none" stroke="#111" stroke-width="1.300"><path d="M5.500 4v12M6 10.500h8"/><path d="M3.500 1.500h4v4h-4zM3.500 8.500h4v4h-4zM3.500 15.500h4v4h-4zM12.500 8.500h4v4h-4z"/></svg></button>
      <button aria-label="浏览器" class="ml-1 flex h-[22px] w-[22px] items-center justify-center border border-[#bbb]"><svg class="size-[18px]" viewBox="0 0 18 18"><circle cx="9" cy="9" r="7" fill="#3a8fc0"/><path d="M5 3q5 1 3 6t4 6" fill="none" stroke="#3ba03b" stroke-width="3"/><path d="M2 16Q0 12 8 6t9-4q1 3-6 8t-9 6z" fill="none" stroke="#e0a818" stroke-width="2"/></svg></button>
      <span class="ml-[9px] h-6 w-px bg-[#aaa]"></span>
      <output class="ml-[14px] text-[10px] whitespace-pre">X = 175.14411  Y = 219.53159</output>
      <span class="ml-auto h-6 w-px bg-[#bbb]"></span>
      <span class="ml-[5px] size-[10px] rounded-full bg-[#1fa01f]"></span><span class="ml-[2px] size-[6px] rounded-full bg-[#aaa]"></span><span class="ml-px size-[6px] rounded-full bg-[#aaa]"></span>
      <span class="ml-[3px] h-6 w-px bg-[#bbb]"></span>
      <button aria-label="查找" class="ml-1 flex h-[22px] w-10 items-center justify-center rounded-sm border border-[#aaa] bg-[#f0f0f0]"><svg class="h-4 w-[18px]" viewBox="0 0 18 16"><path d="M1 15V8l2-6h4v4h4V2h4l2 6v7h-6v-5H7v5z" fill="#111"/><path d="M3 9v5M13 9v5M5 4v3" stroke="#ccc"/></svg></button>
      <p class="ml-[7px] flex w-[94px] gap-[6px] whitespace-nowrap"><span>选择了</span><span class="text-[10px] leading-4">1</span><span>项</span></p>
      <div class="relative mr-[18px]">
        <label class="sr-only" for="filter">选择过滤器</label>
        <select id="filter" class="h-[19px] w-[167px] appearance-none border border-[#aaa] bg-[#e6eaea] px-[5px] text-xs leading-4"><option>常规</option></select>
        <svg class="pointer-events-none absolute top-[7px] right-1 h-[5px] w-[7px]"><use href="#caret"/></svg>
      </div>
    </footer>
  </section>

  <!-- Playlist drawer handle -->
  <button aria-label="展开播放列表" class="absolute top-[294px] right-0 flex h-[100px] w-[23px] items-center justify-center rounded-l-xs bg-[#253449]"><svg class="h-3 w-[7px]" viewBox="0 0 7 12" fill="none" stroke="#48494a" stroke-width="1.300"><path d="M6 1 1 6l5 5"/></svg></button>

  <!-- Player controls -->
  <div class="absolute inset-x-0 bottom-0 h-[84px] bg-[#343434]/60">
    <div class="flex h-6 items-center pr-[10px] pl-[10px]">
      <button aria-label="快退" class="w-6 shrink-0"><svg class="h-2 w-[15px]" viewBox="0 0 15 8"><path d="M7 0v8L0 4zM15 0v8L8 4z" fill="#d0d0d0"/></svg></button>
      <input type="range" aria-label="播放进度" min="0" max="547" value="122" class="h-[2px] min-w-0 flex-1 appearance-none bg-[linear-gradient(to_right,#3fa9ff_22%,#484848_22%)] [&::-webkit-slider-thumb]:size-[9px] [&::-webkit-slider-thumb]:appearance-none [&::-webkit-slider-thumb]:rounded-full [&::-webkit-slider-thumb]:bg-white">
      <button aria-label="快进" class="flex w-6 shrink-0 justify-end"><svg class="h-2 w-[15px]" viewBox="0 0 15 8"><path d="M0 0v8l7-4zM8 0v8l7-4z" fill="#d0d0d0"/></svg></button>
    </div>
    <div class="flex h-12 items-center pr-[31px] pl-[34px] [&>button]:flex [&>button]:shrink-0 [&>button]:items-center [&>button]:justify-center">
      <time class="w-[351px] font-['Noto_Sans',sans-serif] text-[13px] leading-5 text-[#c6d0da]">02:02 / 09:07</time>
      <button aria-label="停止" class="w-[27px]"><svg class="size-[13px]" viewBox="0 0 13 13"><rect width="13" height="13" rx="1" fill="#fff"/></svg></button>
      <button aria-label="上一个" class="ml-[15px] w-[27px]"><svg class="h-[13px] w-3" viewBox="0 0 12 13"><path d="M0 0h1.500v13H0zM12 1v11q0 1-1 .500L2 6.500l9-6q1-.500 1 .500z" fill="#fff"/></svg></button>
      <button aria-label="播放" class="ml-[15px] w-8"><svg class="h-[30px] w-6" viewBox="0 0 24 30"><path d="M1 1.500Q1 0 2.500 1l20 12.500q1.500 1.500 0 3L2.500 29Q1 30 1 28.500z" fill="#fff"/></svg></button>
      <button aria-label="下一个" class="ml-[14px] w-6"><svg class="h-[13px] w-3" viewBox="0 0 12 13"><path d="M10.500 0H12v13h-1.500zM0 1v11q0 1 1 .500l9-6-9-6Q0 0 0 1z" fill="#fff"/></svg></button>
      <button aria-label="静音" class="ml-[34px] w-5"><svg class="h-3 w-[11px]" viewBox="0 0 11 12"><path d="M0 4h2.500L6 .500v11L2.500 8H0z" fill="#eee"/><path d="M7.500 3.500q2.500 2.500 0 5" fill="none" stroke="#eee" stroke-width="1.300"/></svg></button>
      <input type="range" aria-label="音量" min="0" max="100" value="24" class="ml-[2px] h-[2px] w-[62px] appearance-none bg-[linear-gradient(to_right,#3fa9ff_24%,#484848_24%)] [&::-webkit-slider-thumb]:size-[9px] [&::-webkit-slider-thumb]:appearance-none [&::-webkit-slider-thumb]:rounded-full [&::-webkit-slider-thumb]:bg-white">
      <button class="ml-auto h-6 w-[50px] bg-[#333] text-xs text-[#d0d8e0]">倍速</button>
      <button aria-label="截图" class="ml-[14px] w-5"><svg class="size-4" viewBox="0 0 16 16" fill="none" stroke="#d0d0d0"><path d="M.5 13V.500h15V13"/><path d="M0 15.500h16" stroke-dasharray="2 1"/><path d="M3 4h10v8H3z" fill="#d0d0d0" stroke="none"/></svg></button>
      <button aria-label="字幕" class="ml-[14px] w-5 text-base text-[#d0d0d0]">字</button>
      <button aria-label="全屏" class="ml-[14px] w-5"><svg class="size-4" viewBox="0 0 16 16" fill="none" stroke="#d0d0d0" stroke-width="1.500"><path d="m2 2 4 4M14 2l-4 4M2 14l4-4M14 14l-4-4"/><path d="M0 0h5L0 5zM16 0v5l-5-5zM0 16v-5l5 5zM16 16h-5l5-5z" fill="#d0d0d0" stroke="none"/></svg></button>
    </div>
  </div>
</main>
</body>
</html>
